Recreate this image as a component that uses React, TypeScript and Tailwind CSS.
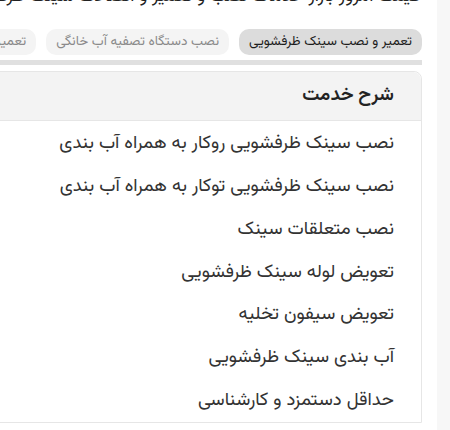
import React from "react";

const items = [
  "نصب سینک ظرفشویی روکار به همراه آب بندی",
  "نصب سینک ظرفشویی توکار به همراه آب بندی",
  "نصب متعلقات سینک",
  "تعویض لوله سینک ظرفشویی",
  "تعویض سیفون تخلیه",
  "آب بندی سینک ظرفشویی",
  "حداقل دستمزد و کارشناسی",
];

const tabs = [
  { label: "تعمیر و نصب سینک ظرفشویی", active: true },
  { label: "نصب دستگاه تصفیه آب خانگی", active: false },
  { label: "تعمیر و سرویس پکیج دیواری", active: false },
];

export default function App() {
  return (
    <div
      className="w-[450px] h-[430px] flex overflow-hidden bg-white"
      style={{ fontFamily: '"Vazirmatn", "Noto Sans Arabic", "Noto Naskh Arabic", "DejaVu Sans", sans-serif' }}
    >
      <div dir="rtl" className="w-[437px] shrink-0 overflow-hidden pr-[15px] flex flex-col">
        <div className="-mt-[16px] text-[18px] leading-[26px] text-[#222] whitespace-nowrap pr-[2px]">
          قیمت امروز بازار خدمات نصب و تعمیر و اتصالات سینک ظرفشویی
        </div>
        <div className="mt-[19px] flex gap-[10px] whitespace-nowrap">
          {tabs.map((t) => (
            <div
              key={t.label}
              className={
                t.active
                  ? "shrink-0 h-[26px] px-[10px] flex items-center rounded-[10px] bg-[#dcdcdc] text-[#1c1c1c] text-[13.5px]"
                  : "shrink-0 h-[26px] px-[10px] flex items-center rounded-[10px] bg-[#f4f4f4] text-[#8a8a8a] text-[13.5px]"
              }
            >
              {t.label}
            </div>
          ))}
        </div>
        <div className="mt-[5px] h-[5px] w-[600px] shrink-0 bg-[#e0e0e0]" />
        <div className="mt-[6px] w-[600px] shrink-0 border border-[#e6e6e6] rounded-tr-[8px] flex flex-col">
          <div className="h-[49px] bg-[#f3f3f3] rounded-tr-[8px] border-b border-[#e6e6e6] flex items-center pr-[27px]">
            <span className="text-[19px] font-semibold text-[#222]">شرح خدمت</span>
          </div>
          <div className="flex flex-col pr-[27px] pt-[2px]">
            {items.map((it) => (
              <div key={it} className="h-[42.7px] flex items-center text-[18.5px] text-[#333]">
                {it}
              </div>
            ))}
          </div>
        </div>
      </div>
      <div className="w-[13px] h-full bg-[#f7f7f7]" />
    </div>
  );
}
